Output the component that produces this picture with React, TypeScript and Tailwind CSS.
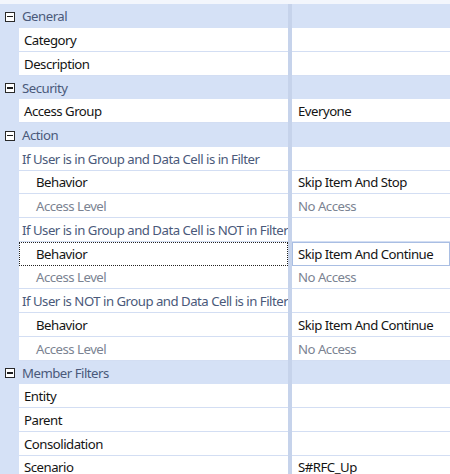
type Row =
  | { kind: "header"; label: string }
  | { kind: "group"; label: string }
  | { kind: "item"; label: string; value?: string; indent?: boolean; disabled?: boolean; focused?: boolean }

const ROWS: Row[] = [
  { kind: "header", label: "General" },
  { kind: "item", label: "Category" },
  { kind: "item", label: "Description" },
  { kind: "header", label: "Security" },
  { kind: "item", label: "Access Group", value: "Everyone" },
  { kind: "header", label: "Action" },
  { kind: "group", label: "If User is in Group and Data Cell is in Filter" },
  { kind: "item", label: "Behavior", value: "Skip Item And Stop", indent: true },
  { kind: "item", label: "Access Level", value: "No Access", indent: true, disabled: true },
  { kind: "group", label: "If User is in Group and Data Cell is NOT in Filter" },
  { kind: "item", label: "Behavior", value: "Skip Item And Continue", indent: true, focused: true },
  { kind: "item", label: "Access Level", value: "No Access", indent: true, disabled: true },
  { kind: "group", label: "If User is NOT in Group and Data Cell is in Filter" },
  { kind: "item", label: "Behavior", value: "Skip Item And Continue", indent: true },
  { kind: "item", label: "Access Level", value: "No Access", indent: true, disabled: true },
  { kind: "header", label: "Member Filters" },
  { kind: "item", label: "Entity" },
  { kind: "item", label: "Parent" },
  { kind: "item", label: "Consolidation" },
  { kind: "item", label: "Scenario", value: "S#RFC_Up" },
]

// row pitch is ~23.75px, so every fourth row is a pixel shorter
const HEIGHTS = ["h-6", "h-6", "h-6", "h-[23px]"]

function MinusBox() {
  return (
    <span className="flex h-[10px] w-[10px] items-center justify-center border border-[#2a2a2a] bg-white">
      <span className="h-[1.5px] w-[6px] bg-[#1e1e1e]" />
    </span>
  )
}

export default function App() {
  return (
    <div
      className="h-[474px] w-[450px] overflow-hidden bg-[#f3f6fc] pt-1 text-[13.2px] tracking-[-0.5px] text-[#141414]"
      style={{ fontFamily: '"Noto Sans", "Segoe UI", sans-serif' }}
    >
      {ROWS.map((row, i) => {
        const h = HEIGHTS[i % 4]
        if (row.kind === "header") {
          return (
            <div key={i} className={`flex ${h} bg-[#d5e1f6]`}>
              <div className="flex w-[19px] shrink-0 items-center justify-center pl-[1px] pt-px">
                <MinusBox />
              </div>
              <div className="flex w-[269px] shrink-0 items-center pl-[3px] pt-[2px] text-[#4a597a]">{row.label}</div>
              <div className="w-1 shrink-0 bg-[#c6d3eb]" />
              <div className="flex-1" />
            </div>
          )
        }
        if (row.kind === "group") {
          return (
            <div key={i} className={`flex ${h} bg-[#d5e1f6]`}>
              <div className="w-[19px] shrink-0" />
              <div className="flex w-[269px] shrink-0 items-center whitespace-nowrap border-b border-[#d3def3] bg-white pl-[3px] pt-[2px] text-[#4a597a]">
                {row.label}
              </div>
              <div className="w-1 shrink-0 bg-[#c6d3eb]" />
              <div className="flex-1 border-b border-[#d3def3] bg-white" />
            </div>
          )
        }
        return (
          <div key={i} className={`flex ${h} bg-[#d5e1f6]`}>
            <div className="w-[19px] shrink-0" />
            <div
              className={`flex w-[269px] shrink-0 items-center bg-white pt-[2px] ${
                row.focused ? "pl-[16px]" : row.indent ? "pl-[17px]" : "pl-[5px]"
              } ${row.disabled ? "text-[#7b8392]" : ""} ${
                row.focused ? "border border-dotted border-[#222]" : "border-b border-[#d3def3]"
              }`}
            >
              {row.label}
            </div>
            <div className="w-1 shrink-0 bg-[#c6d3eb]" />
            <div
              className={`flex flex-1 items-center bg-white pt-[2px] ${row.focused ? "pl-[5px]" : "pl-[6px]"} ${
                row.disabled ? "text-[#7b8392]" : ""
              } ${row.focused ? "border border-[#a9bee3]" : "border-b border-[#d3def3]"}`}
            >
              {row.value}
            </div>
          </div>
        )
      })}
    </div>
  )
}
